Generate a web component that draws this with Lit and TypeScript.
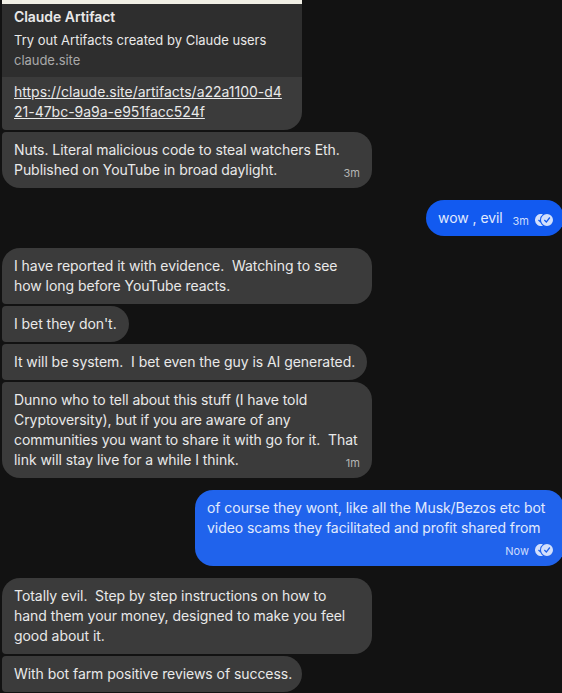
import { LitElement, html, css, svg, nothing } from "lit";
import { customElement } from "lit/decorators.js";
import { classMap } from "lit/directives/class-map.js";

interface Message {
  lines: string[];
  width: number;
  time?: string;
  inlineTime?: boolean;
  tone?: string;
}

interface Group {
  outgoing: boolean;
  messages: Message[];
}

const GROUPS: Group[] = [
  {
    outgoing: false,
    messages: [
      {
        lines: ["Nuts. Literal malicious code to steal watchers Eth.", "Published on YouTube in broad daylight."],
        width: 370,
        time: "3m",
      },
    ],
  },
  { outgoing: true, messages: [{ lines: ["wow , evil"], width: 138, time: "3m", inlineTime: true, tone: "deep" }] },
  {
    outgoing: false,
    messages: [
      { lines: ["I have reported it with evidence.  Watching to see", "how long before YouTube reacts."], width: 370 },
      { lines: ["I bet they don't."], width: 127 },
      { lines: ["It will be system.  I bet even the guy is AI generated."], width: 365 },
      {
        lines: [
          "Dunno who to tell about this stuff (I have told",
          "Cryptoversity), but if you are aware of any",
          "communities you want to share it with go for it.  That",
          "link will stay live for a while I think.",
        ],
        width: 370,
        time: "1m",
      },
    ],
  },
  {
    outgoing: true,
    messages: [
      {
        lines: ["of course they wont, like all the Musk/Bezos etc bot", "video scams they facilitated and profit shared from"],
        width: 369,
        time: "Now",
      },
    ],
  },
  {
    outgoing: false,
    messages: [
      {
        lines: ["Totally evil.  Step by step instructions on how to", "hand them your money, designed to make you feel", "good about it."],
        width: 370,
      },
      { lines: ["With bot farm positive reviews of success."], width: 300 },
    ],
  },
];

const readIcon = svg`
  <path d="M7.92 .32A6 6 0 1 0 7.92 11.68A7 7 0 0 1 5.55 8.7L3 6.5L3.9 5.6L5 6.6A7 7 0 0 1 7.92 .32Z"/>
  <path fill-rule="evenodd" d="M12 0a6 6 0 1 1 0 12a6 6 0 0 1 0-12ZM14.3 3.1L11.3 7L9.8 5.6L8.9 6.5L11.4 8.9L15.3 3.9Z"/>`;

@customElement("chat-bubble")
export class ChatBubble extends LitElement {
  static properties = {
    message: { attribute: false },
    outgoing: { type: Boolean },
    first: { type: Boolean },
    last: { type: Boolean },
  };
  declare message: Message;
  declare outgoing: boolean;
  declare first: boolean;
  declare last: boolean;

  static styles = css`
    :host {
      display: block;
      flex: none;
    }
    .bubble {
      box-sizing: border-box;
      position: relative;
      padding: 8px 12px;
      border-radius: 4px 18px 18px 4px;
      background: #3b3b3b;
      color: #e9e9e9;
    }
    .first {
      border-top-left-radius: 18px;
    }
    .last {
      border-bottom-left-radius: 18px;
    }
    .outgoing {
      border-radius: 18px;
      background: #2063ec;
      color: #e1eafd;
    }
    .deep {
      background: #125af0;
    }
    .line {
      display: block;
      white-space: pre;
    }
    .meta {
      position: absolute;
      right: 12px;
      bottom: 8px;
      display: flex;
      align-items: center;
      gap: 6px;
      font-size: 11px;
      line-height: 14px;
      letter-spacing: 0.06px;
      color: #b5b5b5;
    }
    .outgoing .meta {
      right: 11px;
      color: #cddcfc;
    }
    .below {
      padding-bottom: 28px;
    }
    svg {
      display: block;
      width: 18px;
      height: 12px;
      fill: #d3e0fc;
      margin-top: -2px;
    }
  `;

  render() {
    const m = this.message;
    return html`<div
      class=${classMap({
        bubble: true,
        outgoing: this.outgoing,
        first: this.first,
        last: this.last,
        deep: m.tone === "deep",
        below: this.outgoing && !m.inlineTime,
      })}
      style="width:${m.width}px"
    >
      ${m.lines.map((l) => html`<span class="line">${l}</span>`)}
      ${m.time
        ? html`<div class="meta">
            <span>${m.time}</span>${this.outgoing ? html`<svg viewBox="0 0 18 12">${readIcon}</svg>` : nothing}
          </div>`
        : nothing}
    </div>`;
  }
}

@customElement("link-card")
export class LinkCard extends LitElement {
  static styles = css`
    :host {
      display: block;
      flex: none;
    }
    .card {
      width: 300px;
      height: 130px;
      overflow: hidden;
      border-radius: 0 0 18px 4px;
      background: #3b3b3b;
      color: #e9e9e9;
    }
    .image {
      height: 4px;
      background: #f1efe5;
    }
    .preview {
      box-sizing: border-box;
      height: 73px;
      padding: 4px 12px 0;
      background: #2e2e2e;
    }
    .title {
      font-weight: 600;
      line-height: 18px;
    }
    .description {
      margin-top: 4px;
      font-size: 13px;
      line-height: 20px;
      letter-spacing: 0;
    }
    .domain {
      font-size: 13px;
      line-height: 20px;
      letter-spacing: -0.03px;
      color: #a9a9a9;
    }
    .link {
      padding: 5px 12px 8px;
      letter-spacing: -0.01px;
      text-decoration: underline;
    }
    .line {
      display: block;
      white-space: pre;
    }
  `;

  render() {
    return html`<div class="card">
      <div class="image"></div>
      <div class="preview">
        <div class="title">Claude Artifact</div>
        <div class="description">Try out Artifacts created by Claude users</div>
        <div class="domain">claude.site</div>
      </div>
      <div class="link">
        <span class="line">https://claude.site/artifacts/a22a1100-d4</span>
        <span class="line">21-47bc-9a9a-e951facc524f</span>
      </div>
    </div>`;
  }
}

@customElement("app-root")
export class AppRoot extends LitElement {
  static styles = css`
    :host {
      display: block;
      box-sizing: border-box;
      width: 562px;
      height: 693px;
      overflow: hidden;
      background: #121212;
      font: 400 14px/20px Inter, "Liberation Sans", sans-serif;
      letter-spacing: -0.055px;
    }
    .thread {
      display: flex;
      flex-direction: column;
      gap: 12px;
      width: 562px;
      padding-left: 2px;
      box-sizing: border-box;
    }
    .group {
      display: flex;
      flex-direction: column;
      align-items: flex-start;
      gap: 2px;
    }
    .sent {
      align-items: flex-end;
      margin-right: -2px;
    }
  `;

  render() {
    return html`<div class="thread">
      ${GROUPS.map(
        (g, gi) => html`<div class=${classMap({ group: true, sent: g.outgoing })}>
          ${gi === 0 ? html`<link-card></link-card>` : nothing}
          ${g.messages.map(
            (m, i) => html`<chat-bubble
              .message=${m}
              ?outgoing=${g.outgoing}
              ?first=${gi > 0 && i === 0}
              ?last=${i === g.messages.length - 1 && gi !== GROUPS.length - 1}
            ></chat-bubble>`
          )}
        </div>`
      )}
    </div>`;
  }
}
